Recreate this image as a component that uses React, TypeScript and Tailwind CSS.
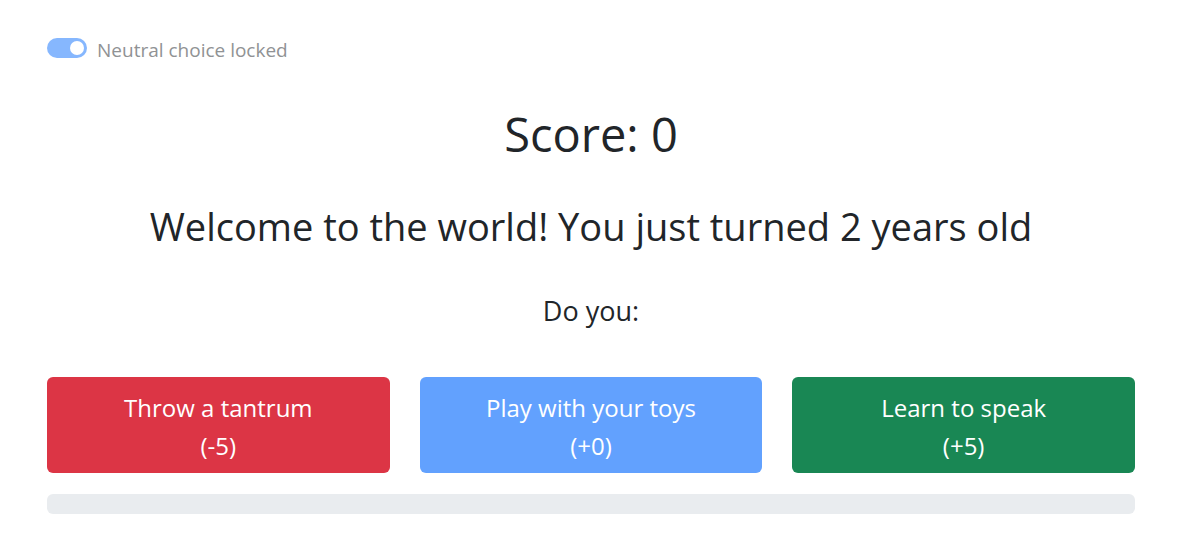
import React from "react";

const choices = [
  { label: "Throw a tantrum", delta: "(-5)", cls: "bg-[#dc3545]" },
  { label: "Play with your toys", delta: "(+0)", cls: "bg-[#62a1fe]" },
  { label: "Learn to speak", delta: "(+5)", cls: "bg-[#198754]" },
];

export default function App() {
  return (
    <div className="min-h-screen bg-white pl-[47px] pr-12 pt-[38px] text-[#212529] font-['Open_Sans',sans-serif]">
      {/* locked switch */}
      <div className="flex items-center gap-2.5 h-5">
        <div className="relative w-10 h-5 rounded-full bg-[#86b7fe]">
          <span className="absolute right-[3px] top-[3px] w-[14px] h-[14px] rounded-full bg-white" />
        </div>
        <span className="pt-[3px] text-[19px] leading-5 text-[#909294]">Neutral choice locked</span>
      </div>

      <h1 className="mt-[46px] text-center text-[47px] leading-[60px] font-normal">Score: 0</h1>

      <h2 className="mt-[39px] text-center text-[38px] leading-[46px] font-normal">
        Welcome to the world! You just turned 2 years old
      </h2>

      <h4 className="mt-[47px] text-center text-[27px] leading-[30px] font-normal">Do you:</h4>

      <div className="mt-[51px] grid grid-cols-3 gap-[30px]">
        {choices.map((c) => (
          <button
            key={c.label}
            className={`${c.cls} rounded-md pt-[12px] pb-[8px] text-white text-[24px] leading-[38px] text-center`}
          >
            <div>{c.label}</div>
            <div>{c.delta}</div>
          </button>
        ))}
      </div>

      <div className="mt-[21px] h-5 rounded-md bg-[#e9ecef]" />
    </div>
  );
}
